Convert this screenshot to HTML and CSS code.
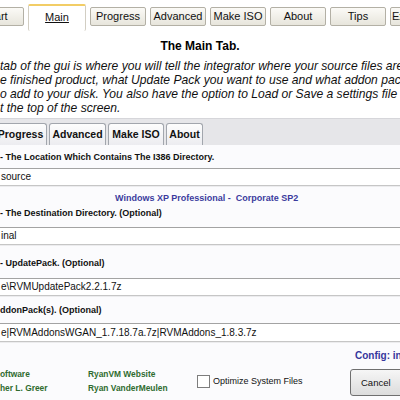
FILE: index.html
```html
<!DOCTYPE html>
<html>
<head>
<meta charset="utf-8">
<link rel="stylesheet" href="styles.css">
</head>
<body>
<div class="page">
  <nav class="toptabs">
    <div class="ttab">Start</div>
    <div class="ttab active"><span class="ul">Main</span></div>
    <div class="ttab">Progress</div>
    <div class="ttab">Advanced</div>
    <div class="ttab">Make ISO</div>
    <div class="ttab">About</div>
    <div class="ttab">Tips</div>
    <div class="ttab last">Extras</div>
  </nav>
  <h1 class="title">The Main Tab.</h1>
  <div class="intro">
    <div>tab of the gui is where you will tell the integrator where your source files are,</div>
    <div>e finished product, what Update Pack you want to use and what addon packs</div>
    <div>o add to your disk. You also have the option to Load or Save a settings file by</div>
    <div>t the top of the screen.</div>
  </div>
  <div class="app">
    <div class="apptabs">
      <div class="atab w-progress">Progress</div>
      <div class="atab w-adv">Advanced</div>
      <div class="atab w-iso">Make ISO</div>
      <div class="atab w-about">About</div>
    </div>
    <div class="panel">
      <div class="label l1">- The Location Which Contains The I386 Directory.</div>
      <div class="field f1">source</div>
      <div class="osname">Windows XP Professional -&nbsp; Corporate SP2</div>
      <div class="label l2">- The Destination Directory. (Optional)</div>
      <div class="field f2">inal</div>
      <div class="label l3">- UpdatePack. (Optional)</div>
      <div class="field f3">e\RVMUpdatePack2.2.1.7z</div>
      <div class="label l4">ddonPack(s). (Optional)</div>
      <div class="field f4">e|RVMAddonsWGAN_1.7.18.7a.7z|RVMAddons_1.8.3.7z</div>
      <div class="config">Config: inUse.ini</div>
      <div class="footer">
        <div class="credits c1">
          <div>oftware</div>
          <div>her L. Greer</div>
        </div>
        <div class="credits c2">
          <div>RyanVM Website</div>
          <div>Ryan VanderMeulen</div>
        </div>
        <label class="opt"><span class="box"></span>Optimize System Files</label>
        <div class="btn">Cancel</div>
      </div>
    </div>
  </div>
</div>
</body>
</html>
```
FILE: styles.css
```css
html, body {
  margin: 0;
  padding: 0;
  background: #ffffff;
}
body {
  width: 400px;
  height: 400px;
  overflow: hidden;
  font-family: "Liberation Sans", Arial, sans-serif;
  color: #000;
}
.page {
  width: 400px;
  height: 400px;
  overflow: hidden;
}

/* top tabs */
.toptabs {
  display: flex;
  gap: 4px;
  margin-left: -32px;
  height: 30px;
  white-space: nowrap;
}
.ttab {
  flex: 0 0 56px;
  box-sizing: border-box;
  height: 19px;
  margin-top: 7px;
  border: 1px solid #b3b0a5;
  border-radius: 2px;
  background: linear-gradient(#fbfaf6, #e7e5dc);
  font-size: 11px;
  line-height: 17px;
  text-align: center;
  color: #111;
}
.ttab.active {
  flex-basis: 58px;
  height: 27px;
  margin-top: 4px;
  background: #fff;
  border-color: #d2cec3;
  border-top: 2px solid #f2cd66;
  border-bottom: none;
  line-height: 22px;
}
.ttab.last {
  text-align: left;
  padding-left: 1px;
}
.ul {
  text-decoration: underline;
}

.title {
  margin: 9px 0 0;
  font-size: 12px;
  line-height: 14px;
  font-weight: bold;
  text-align: center;
}

.intro {
  margin-top: 6px;
  font-size: 12.1px;
  line-height: 14px;
  font-style: italic;
  white-space: nowrap;
  color: #111;
}

/* embedded app */
.app {
  margin-top: 3px;
  white-space: nowrap;
}
.apptabs {
  display: flex;
  gap: 2px;
  height: 27px;
  box-sizing: border-box;
  background: #e6e6e9;
  border-top: 1px solid #d6d6da;
  margin-left: -10px;
}
.atab {
  flex: 0 0 auto;
  box-sizing: border-box;
  height: 22px;
  margin-top: 4px;
  border: 1px solid #a2a6ad;
  border-bottom: none;
  border-radius: 3px 3px 0 0;
  background: linear-gradient(#fdfdfd, #ececf0);
  font-size: 10.5px;
  font-weight: bold;
  line-height: 21px;
  text-align: center;
  color: #111;
}
.w-progress { width: 57px; padding-left: 4px; }
.w-adv { width: 57px; }
.w-iso { width: 56px; }
.w-about { width: 37px; }

.panel {
  background: #fbfbfd;
  padding-top: 6px;
  height: 260px;
}
.label {
  font-size: 9px;
  line-height: 12px;
  font-weight: bold;
  color: #111;
}
.field {
  box-sizing: border-box;
  height: 18px;
  background: #fff;
  border-top: 1px solid #a3a3a3;
  border-bottom: 1px solid #c6c6c6;
  box-shadow: 0 1px 0 #ececee;
  font-size: 10px;
  line-height: 16px;
  padding-left: 1px;
  color: #111;
}
.f1 { margin-top: 5px; }
.osname {
  margin-top: 6px;
  padding-left: 115px;
  font-size: 9px;
  line-height: 12px;
  font-weight: bold;
  color: #3b3b9e;
}
.l2 { margin-top: 3px; }
.f2 { margin-top: 8px; }
.l3 { margin-top: 12px; }
.f3 { margin-top: 9px; }
.l4 { margin-top: 8px; }
.f4 { margin-top: 7px; height: 19px; line-height: 17px; }

.config {
  margin-top: 8px;
  padding-left: 355px;
  font-size: 10px;
  line-height: 12px;
  font-weight: bold;
  color: #36369c;
}

.footer {
  display: flex;
  align-items: center;
  margin-top: 4px;
  height: 30px;
}
.credits {
  flex: 0 0 auto;
  font-size: 8.4px;
  line-height: 14px;
  font-weight: bold;
  color: #2f6b2f;
}
.c1 { width: 88px; }
.c2 { width: 109px; }
.opt {
  flex: 0 0 153px;
  display: flex;
  align-items: center;
  font-size: 9px;
  color: #111;
}
.box {
  flex: 0 0 auto;
  width: 11px;
  height: 11px;
  border: 1px solid #7d7d7d;
  background: #fff;
  margin-right: 3px;
}
.btn {
  flex: 0 0 75px;
  box-sizing: border-box;
  height: 27px;
  margin-top: 3px;
  border: 1px solid #6f6f6f;
  border-radius: 3px;
  background: linear-gradient(#f6f6f6, #dcdcdc);
  font-size: 9.5px;
  line-height: 25px;
  padding-left: 10px;
  color: #111;
}
```
